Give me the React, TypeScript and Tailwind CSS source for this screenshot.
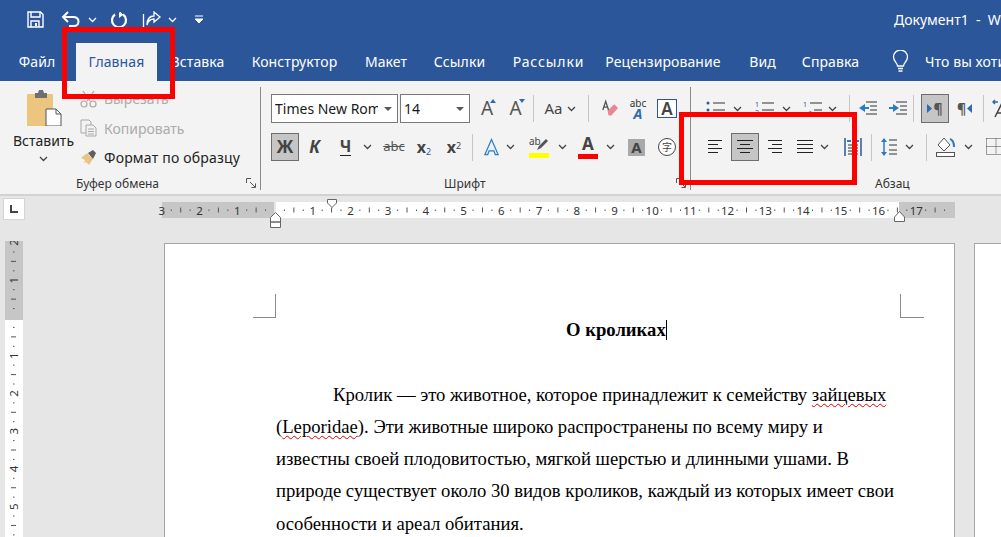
import React from "react";

const Chev = ({ c = "#444" }: { c?: string }) => (
  <svg width="9" height="6" viewBox="0 0 9 6" fill="none" className="shrink-0"><path d="M1 1l3.5 3.5L8 1" stroke={c} strokeWidth="1.3" /></svg>
);

const Cell = ({ w, children }: { w: string; children?: React.ReactNode }) => (
  <div className={`${w} h-full shrink-0 flex items-center justify-center`}>{children}</div>
);

const Sep = () => <div className="w-px h-[27px] bg-[#c6c6c6] shrink-0" />;

const Combo = ({ w, text }: { w: string; text: string }) => (
  <div className={`${w} h-[29px] shrink-0 bg-white border border-[#7a7a7a] flex items-center pl-[3px] pr-[5px] text-[14px] text-[#1a1a1a] overflow-hidden`}>
    <span className="flex-1 overflow-hidden whitespace-nowrap mr-[6px]">{text}</span>
    <svg width="8" height="4" viewBox="0 0 8 4" className="shrink-0"><path d="M0 0h8L4 4z" fill="#555" /></svg>
  </div>
);

const lines = (rows: [number, number][], width = 14) => (
  <svg width={width} height="16" viewBox={`0 0 ${width} 16`} className="shrink-0">
    {rows.map(([a, b], i) => (
      <path key={i} d={`M${a} ${1.5 + i * 4}H${b}`} stroke="#222" strokeWidth="1" />
    ))}
  </svg>
);

const Launcher = () => (
  <svg width="11" height="11" viewBox="0 0 11 11" fill="none" stroke="#555" strokeWidth="1" className="shrink-0">
    <path d="M.5 5V.5H5M4 4l5 5M5.5 9.5h4v-4" />
  </svg>
);

const Tab = ({ w, t, active }: { w: string; t: string; active?: boolean }) => (
  <div className={`${w} shrink-0 h-[38px] flex items-center justify-center whitespace-nowrap pb-[1px] ${active ? "bg-[#f3f3f3] text-[#2b579a]" : "text-white"}`}>{t}</div>
);

const HRuler = () => {
  const zero = 113;
  const cm = 37.72;
  const items: React.ReactNode[] = [];
  for (let n = -3; n <= 17; n++) {
    const x = zero + n * cm;
    if (n !== 0)
      items.push(<text key={`t${n}`} x={x} y="12.5" textAnchor="middle" fontSize="11.5" fill="#333">{Math.abs(n)}</text>);
    [0.25, 0.5, 0.75].forEach((f) => {
      const px = x + f * cm;
      if (px < 792)
        items.push(f === 0.5
          ? <path key={`${n}${f}`} d={`M${px} 5.5v5`} stroke="#555" />
          : <path key={`${n}${f}`} d={`M${px} 7.5v1.5`} stroke="#555" />);
    });
  }
  return (
    <svg width="800" height="32" viewBox="0 0 800 32" className="overflow-visible block">
      <rect x="0" y="4" width="112" height="16" fill="#c6c6c6" />
      <rect x="114" y="4" width="623" height="16" fill="#fff" />
      <rect x="737" y="4" width="56" height="16" fill="#c6c6c6" />
      <g transform="translate(0,4)">{items}</g>
      <path d="M108.5 19.5l5-5 5 5v4.5h-10zM108.5 24h10v5.5h-10z" fill="#fff" stroke="#666" />
      <path d="M165.500 1.500h9v3.500l-4.500 4.500-4.500-4.500z" fill="#fff" stroke="#666" />
      <path d="M732.500 19l5-5.500 5 5.500v4.500h-10z" fill="#fff" stroke="#666" />
    </svg>
  );
};

const VRuler = () => {
  const zero = 77;
  const cm = 37.72;
  const items: React.ReactNode[] = [];
  for (let n = -2; n <= 6; n++) {
    const y = zero + n * cm;
    if (n !== 0)
      items.push(<text key={`t${n}`} transform={`translate(13,${y}) rotate(-90)`} textAnchor="middle" fontSize="11.5" fill="#333">{Math.abs(n)}</text>);
    [0.25, 0.5, 0.75].forEach((f) => {
      const py = y + f * cm;
      items.push(f === 0.5
        ? <path key={`${n}${f}`} d={`M6 ${py}h5`} stroke="#555" />
        : <path key={`${n}${f}`} d={`M8 ${py}h1.500`} stroke="#555" />);
    });
  }
  return (
    <svg width="18" height="296" viewBox="0 0 18 296" className="block">
      <rect width="18" height="79" fill="#c6c6c6" />
      <rect y="79" width="18" height="217" fill="#fff" />
      {items}
    </svg>
  );
};

export default function App() {
  return (
    <div className="relative w-[1001px] h-[537px] overflow-hidden flex flex-col bg-[#e6e6e6] [font-family:'Noto_Sans',sans-serif]">
      {/* Title bar */}
      <div className="h-[43px] bg-[#2b579a] flex items-center shrink-0 pb-[4px] pl-[27px] text-white">
        <svg width="17" height="17" viewBox="0 0 17 17" fill="none" stroke="#fff" strokeWidth="1.400" className="shrink-0">
          <path d="M1 1h12.500L16 3.500V16H1z" />
          <path d="M4 1v5h9V1M4 16v-6h8v6" />
          <path d="M8 12h2v3H8z" fill="#fff" stroke="none" />
        </svg>
        <svg width="20" height="17" viewBox="0 0 20 17" fill="none" className="ml-[17px] shrink-0">
          <path d="M7 1L2 6l5 5" stroke="#fff" strokeWidth="2" />
          <path d="M2 6h10c3.500 0 5.500 2 5.500 4.500S15.500 15 13 15H8" stroke="#fff" strokeWidth="2" />
        </svg>
        <div className="ml-[7px] shrink-0"><Chev c="#fff" /></div>
        <svg width="18" height="18" viewBox="0 0 18 18" fill="none" className="ml-[13px] shrink-0">
          <path d="M5 3.500a7 7 0 1 0 8 0" stroke="#fff" strokeWidth="2.200" />
          <path d="M9 1v6l4-3z" fill="#fff" />
          <path d="M10 1l4 4" stroke="#fff" strokeWidth="1" />
        </svg>
        <svg width="20" height="18" viewBox="0 0 20 18" fill="none" stroke="#fff" className="ml-[14px] shrink-0" strokeWidth="1.300">
          <path d="M1.500 3v14M1.500 17h10" />
          <path d="M12 1l6 5-6 5V8c-4 0-6 2-7 6 0-6 3-9 7-9z" />
        </svg>
        <div className="ml-[6px] shrink-0"><Chev c="#fff" /></div>
        <svg width="8" height="9" viewBox="0 0 8 9" className="ml-[18px] shrink-0">
          <path d="M0 1h8M0 4h8L4 8z" fill="#fff" stroke="#fff" strokeWidth="1" />
        </svg>
        <div className="ml-[691px] shrink-0 whitespace-nowrap text-[14px]">Документ1&nbsp;&nbsp;-&nbsp;&nbsp;Word</div>
      </div>
      {/* Tabs */}
      <div className="h-[38px] bg-[#2b579a] flex text-[14px] tracking-[0.1px] shrink-0 whitespace-nowrap">
        <Tab w="w-[76px] pr-[2px]" t="Файл" />
        <Tab w="w-[81px]" t="Главная" active />
        <Tab w="w-[81px]" t="Вставка" />
        <Tab w="w-[113px]" t="Конструктор" />
        <Tab w="w-[70px]" t="Макет" />
        <Tab w="w-[77px]" t="Ссылки" />
        <Tab w="w-[101px] tracking-[0.9px]" t="Рассылки" />
        <Tab w="w-[128px]" t="Рецензирование" />
        <Tab w="w-[71px]" t="Вид" />
        <Tab w="w-[65px]" t="Справка" />
        <div className="ml-[29px] flex items-center text-white h-full pb-[1px]">
          <svg width="17" height="23" viewBox="0 0 17 23" fill="none" stroke="#fff" strokeWidth="1.300" className="shrink-0">
            <path d="M5.500 16c0-3-4-4.500-4-9a7 7 0 0 1 14 0c0 4.500-4 6-4 9z" />
            <path d="M6 18.500h5M6.500 21h4" />
          </svg>
          <span className="ml-[16px]">Что вы хотите сделать?</span>
        </div>
      </div>

      {/* Ribbon */}
      <div className="h-[115px] bg-[#f3f3f3] border-b-2 border-[#d2d2d2] flex text-[#333] shrink-0 overflow-hidden">
        {/* Clipboard */}
        <div className="w-[261px] shrink-0 relative flex flex-col pt-[8px] pb-[2px]">
          <div className="flex-1 flex">
            <div className="w-[86px] flex flex-col items-center pl-[1px]">
              <svg width="36" height="37" viewBox="0 0 36 37" className="shrink-0">
                <path d="M1 5h26v32H1z" fill="#ecc57e" />
                <path d="M9 4h3l1-3h4l1 3h3v5H9z" fill="#6f6f6f" />
                <path d="M20 20h10l5 5v12H20z" fill="#fff" stroke="#555" />
                <path d="M30 20v5h5" fill="none" stroke="#555" />
              </svg>
              <span className="text-[14px] mt-[5px] leading-[20px] text-[#222]">Вставить</span>
              <div className="mt-[5px]"><Chev /></div>
            </div>
            <div className="flex flex-col text-[14px] leading-[29.5px] -ml-[6px] -mt-[5px] whitespace-nowrap">
              <div className="flex items-center gap-[7px] text-[#ababab]">
                <svg width="17" height="18" viewBox="0 0 17 18" fill="none" stroke="#a8a8a8" strokeWidth="1.200" className="shrink-0">
                  <path d="M3 1l7 10M14 1L7 11" /><circle cx="4" cy="14" r="3" /><circle cx="13" cy="14" r="3" />
                </svg>
                <span>Вырезать</span>
              </div>
              <div className="flex items-center gap-[7px] text-[#ababab]">
                <svg width="17" height="18" viewBox="0 0 17 18" fill="#f3f3f3" stroke="#a8a8a8" className="shrink-0">
                  <path d="M1 1h8l2 2v11H1z" /><path d="M6 6h7l3 3v8H6z" /><path d="M8 10h6M8 12.500h6M8 15h6" />
                </svg>
                <span>Копировать</span>
              </div>
              <div className="flex items-center gap-[7px] text-[#222]">
                <svg width="17" height="17" viewBox="0 0 17 17" className="shrink-0">
                  <path d="M1 9l6-5 6 6-4 6-3-3-2 1 1-3z" fill="#e7c586" />
                  <path d="M8 4l5-3 3 3-3 6z" fill="#5f5f5f" />
                </svg>
                <span className="tracking-[0.2px]">Формат по образцу</span>
              </div>
            </div>
          </div>
          <div className="flex items-center h-[17px] text-[12px] pl-[76px] pr-[4px] justify-between">
            <span>Буфер обмена</span>
            <Launcher />
          </div>
          <div className="absolute right-0 top-[6px] bottom-[4px] w-px bg-[#8a8a8a]" />
        </div>

        {/* Font */}
        <div className="w-[430px] shrink-0 relative flex flex-col pt-[13px] pb-[2px]">
          <div className="h-[29px] flex items-center pl-[10px]">
            <Combo w="w-[127px]" text="Times New Roman" />
            <div className="w-[2px] shrink-0" />
            <Combo w="w-[70px]" text="14" />
            <Cell w="w-[28px]">
              <span className="relative ml-[6px] text-[19px] leading-none text-[#555]">A<svg width="6" height="4" viewBox="0 0 6 4" className="absolute -right-[3px] top-0"><path d="M0 4l3-4 3 4z" fill="#2b6cb0" /></svg></span>
            </Cell>
            <Cell w="w-[35px]">
              <span className="relative text-[19px] leading-none text-[#555]">A<svg width="6" height="4" viewBox="0 0 6 4" className="absolute -right-[3px] top-0"><path d="M0 0l3 4 3-4z" fill="#2b6cb0" /></svg></span>
            </Cell>
            <Sep />
            <div className="w-[10px] shrink-0" />
            <span className="text-[15px] text-[#444] w-[19px] shrink-0 text-center">Aa</span>
            <Cell w="w-[16px]"><Chev /></Cell>
            <div className="w-[9px] shrink-0" />
            <Sep />
            <div className="w-[11px] shrink-0" />
            <svg width="18" height="19" viewBox="0 0 19 19" className="shrink-0">
              <path d="M8 12l7-7 4 4-7 8H9z" fill="#e98595" />
              <path d="M3 11L6 2l3 9M4 8h4" fill="none" stroke="#555" strokeWidth="1.400" />
            </svg>
            <div className="w-[11px] shrink-0" />
            <div className="relative w-[18px] h-[20px] shrink-0 leading-none text-center">
              <span className="block text-[10px] text-[#333] leading-[9px]">abc</span>
              <span className="block text-[14px] italic font-bold text-[#2b6cb0] leading-[11px]">A</span>
            </div>
            <div className="w-[10px] shrink-0" />
            <div className="w-[20px] h-[19px] shrink-0 border border-[#2b579a] bg-white flex items-center justify-center text-[17px] leading-none font-semibold text-[#444]">A</div>
          </div>
          <div className="h-[28px] flex items-center pl-[10px] mt-[10px]">
            <div className="w-[28px] h-[28px] shrink-0 bg-[#c6c6c6] border border-[#6e6e6e] flex items-center justify-center font-bold text-[17px] text-[#444]">Ж</div>
            <Cell w="w-[31px]"><span className="font-bold italic text-[17px] text-[#444]">К</span></Cell>
            <Cell w="w-[31px]"><span className="font-bold text-[16px] text-[#444] border-b-[1.500px] border-[#222] leading-[17px]">Ч</span></Cell>
            <Cell w="w-[12px]"><Chev /></Cell>
            <Cell w="w-[42px]"><span className="text-[13px] text-[#555] line-through">abc</span></Cell>
            <Cell w="w-[18px]"><span className="font-bold text-[16px] text-[#444] leading-none">x<sub className="text-[9px] text-[#2b579a] font-normal">2</sub></span></Cell>
            <div className="w-[12px] shrink-0" />
            <Cell w="w-[18px]"><span className="font-bold text-[16px] text-[#444] leading-none">x<sup className="text-[9px] font-normal">2</sup></span></Cell>
            <div className="w-[9px] shrink-0" />
            <Sep />
            <div className="w-[10px] shrink-0" />
            <svg width="17" height="20" viewBox="0 0 18 20" className="shrink-0">
              <path d="M9 2L2 18h3l1.500-4h5L13 18h3z" fill="#eaf3fb" stroke="#2b7bc4" strokeWidth="1.300" />
            </svg>
            <Cell w="w-[20px]"><Chev /></Cell>
            <div className="w-[9px] shrink-0" />
            <div className="w-[20px] shrink-0 flex flex-col items-center h-[28px]">
              <svg width="20" height="17" viewBox="0 0 20 17" className="mt-[3px] shrink-0">
                <text x="0" y="9" fontSize="10" fill="#444">ab</text>
                <path d="M8 14l2-4 7-7 2 2-7 7z" fill="#555" />
              </svg>
              <div className="w-[20px] h-[5px] bg-[#ffff00]" />
            </div>
            <Cell w="w-[26px]"><Chev /></Cell>
            <div className="w-[3px] shrink-0" />
            <div className="w-[20px] shrink-0 flex flex-col items-center h-[28px]">
              <span className="font-bold text-[17px] leading-[20px] text-[#444] mt-[1px]">A</span>
              <div className="w-[20px] h-[5px] bg-[#ff0000]" />
            </div>
            <Cell w="w-[24px]"><Chev /></Cell>
            <div className="w-[6px] shrink-0" />
            <div className="w-[17px] h-[17px] shrink-0 bg-[#a9a9a9] flex items-center justify-center font-bold text-[15px] leading-none text-[#444]">A</div>
            <div className="w-[13px] shrink-0" />
            <div className="w-[18px] h-[18px] shrink-0 rounded-full border border-[#444] bg-white flex items-center justify-center text-[10px] leading-none text-[#444] [font-family:'Noto_Sans_CJK_SC',sans-serif]">字</div>
          </div>
          <div className="flex-1" />
          <div className="h-[17px] flex items-center text-[12px] pl-[183px] pr-[4px] justify-between">
            <span>Шрифт</span>
            <Launcher />
          </div>
          <div className="absolute right-0 top-[6px] bottom-[4px] w-px bg-[#8a8a8a]" />
        </div>

        {/* Paragraph */}
        <div className="flex-1 relative flex flex-col pt-[13px] pb-[2px] overflow-hidden">
          <div className="h-[29px] flex items-center pl-[15px]">
            <svg width="20" height="18" viewBox="0 0 20 18" className="shrink-0">
              <circle cx="2" cy="3" r="1.500" fill="#2b579a" /><circle cx="2" cy="10" r="1.500" fill="#2b579a" />
              <path d="M7 3h12M7 10h12" stroke="#333" strokeWidth="1.200" />
            </svg>
            <Cell w="w-[23px]"><Chev /></Cell>
            <div className="w-[6px] shrink-0" />
            <svg width="20" height="18" viewBox="0 0 20 18" className="shrink-0">
              <text x="0" y="7" fontSize="7" fill="#2b579a">1</text><text x="0" y="15" fontSize="7" fill="#2b579a">2</text>
              <path d="M7 3h12M7 10h12" stroke="#333" strokeWidth="1.200" />
            </svg>
            <Cell w="w-[22px]"><Chev /></Cell>
            <div className="w-[6px] shrink-0" />
            <svg width="20" height="18" viewBox="0 0 20 18" className="shrink-0">
              <text x="0" y="7" fontSize="7" fill="#2b579a">1</text><text x="5" y="15" fontSize="7" fill="#2b579a">a</text>
              <path d="M7 3h12M11 10h8" stroke="#333" strokeWidth="1.200" />
            </svg>
            <Cell w="w-[18px]"><Chev /></Cell>
            <div className="w-[8px] shrink-0" />
            <Sep />
            <div className="w-[8px] shrink-0" />
            <svg width="19" height="18" viewBox="0 0 19 18" className="shrink-0" fill="none">
              <path d="M8 2h11M12 6h7M12 10h7M8 14h11" stroke="#333" />
              <path d="M7 4L1 8l6 4z" fill="#2b7bc4" /><path d="M5 8h6" stroke="#2b7bc4" strokeWidth="2" />
            </svg>
            <div className="w-[11px] shrink-0" />
            <svg width="19" height="18" viewBox="0 0 19 18" className="shrink-0" fill="none">
              <path d="M8 2h11M12 6h7M12 10h7M8 14h11" stroke="#333" />
              <path d="M5 4l6 4-6 4z" fill="#2b7bc4" /><path d="M1 8h6" stroke="#2b7bc4" strokeWidth="2" />
            </svg>
            <div className="w-[6px] shrink-0" />
            <Sep />
            <div className="w-[7px] shrink-0" />
            <div className="w-[28px] h-[29px] shrink-0 bg-[#c6c6c6] border border-[#6e6e6e] flex items-center justify-center text-[14px] font-bold text-[#555] leading-none">
              <svg width="5" height="9" viewBox="0 0 5 9" className="mr-[1px] shrink-0"><path d="M0 0l5 4.500L0 9z" fill="#2b6cb0" /></svg>¶
            </div>
            <div className="w-[8px] shrink-0" />
            <div className="flex items-center text-[14px] font-bold text-[#555] w-[18px] shrink-0 leading-none">
              ¶<svg width="5" height="9" viewBox="0 0 5 9" className="ml-[1px] shrink-0"><path d="M5 0L0 4.500 5 9z" fill="#2b6cb0" /></svg>
            </div>
            <div className="w-[8px] shrink-0" />
            <Sep />
            <div className="w-[8px] shrink-0" />
            <svg width="16" height="20" viewBox="0 0 16 20" className="shrink-0" fill="none">
              <path d="M6 3H1m2-2L1 3l2 2" stroke="#2b6cb0" strokeWidth="1.500" />
              <path d="M3 18L9 6l5 12M5 14h7" stroke="#444" strokeWidth="1.500" />
            </svg>
          </div>
          <div className="h-[28px] flex items-center pl-[17px] mt-[10px]">
            {lines([[0, 14], [0, 10], [0, 14], [0, 10]])}
            <div className="w-[9px] shrink-0" />
            <div className="w-[28px] h-[28px] shrink-0 bg-[#c6c6c6] border border-[#6e6e6e] flex items-center justify-center">
              {lines([[0, 16], [3, 13], [0, 16], [3, 13]], 16)}
            </div>
            <div className="w-[9px] shrink-0" />
            {lines([[0, 14], [4, 14], [0, 14], [4, 14]])}
            <div className="w-[15px] shrink-0" />
            {lines([[0, 16], [0, 16], [0, 16], [0, 16]], 16)}
            <Cell w="w-[22px]"><Chev /></Cell>
            <div className="w-[9px] shrink-0" />
            <svg width="18" height="20" viewBox="0 0 18 20" className="shrink-0" fill="none">
              <path d="M1 1v18M17 1v18" stroke="#2b579a" strokeWidth="1.500" />
              <path d="M4 8h10M4 11h10M4 14h10M4 17h10" stroke="#333" />
              <path d="M3 4h4M11 4h4" stroke="#2b7bc4" strokeWidth="2" />
            </svg>
            <div className="w-[9px] shrink-0" />
            <Sep />
            <div className="w-[9px] shrink-0" />
            <svg width="16" height="20" viewBox="0 0 16 20" className="shrink-0" fill="none">
              <path d="M3 2v16" stroke="#2b7bc4" strokeWidth="1.500" /><path d="M0 5l3-4 3 4zM0 15l3 4 3-4z" fill="#2b7bc4" />
              <path d="M8 3h8M8 8h8M8 13h8M8 17h8" stroke="#333" />
            </svg>
            <Cell w="w-[24px]"><Chev /></Cell>
            <div className="w-[5px] shrink-0" />
            <Sep />
            <div className="w-[9px] shrink-0" />
            <svg width="20" height="22" viewBox="0 0 20 22" className="shrink-0" fill="none">
              <path d="M8 2L2 9l6 6 6-6z" stroke="#555" fill="#fff" />
              <path d="M14 3c3 1 4 4 4 8" stroke="#2b7bc4" strokeWidth="2" />
              <rect x="0.500" y="16.500" width="18" height="4" fill="#fff" stroke="#555" />
            </svg>
            <Cell w="w-[24px]"><Chev /></Cell>
            <div className="w-[6px] shrink-0" />
            <svg width="20" height="20" viewBox="0 0 20 20" className="shrink-0" fill="none" stroke="#444">
              <path d="M.5 1.500h19M.5 9.500h19M.5 17.500h19M.5 1.500v16M10 1.500v16" strokeDasharray="1 1" />
            </svg>
          </div>
          <div className="flex-1" />
          <div className="h-[17px] flex items-center text-[12px] pl-[184px] whitespace-nowrap">
            <span>Абзац</span>
          </div>
        </div>
      </div>

      {/* Document area */}
      <div className="flex-1 min-h-0 flex flex-col">
        <div className="h-[45px] shrink-0 flex pl-[3px] pt-[2px] relative">
          <div className="w-[22px] h-[22px] shrink-0 bg-white border border-[#d5d5d5] flex items-center justify-center">
            <svg width="9" height="8" viewBox="0 0 9 8"><path d="M1 0v7h7" fill="none" stroke="#444" strokeWidth="2" /></svg>
          </div>
          <div className="ml-[137px] h-[30px]"><HRuler /></div>
        </div>
        <div className="flex-1 min-h-0 flex">
          <div className="w-[164px] shrink-0 pl-[5px]"><VRuler /></div>
          <div className="w-[791px] shrink-0 mt-[2px] bg-white border border-[#a6a6a6] relative text-black [font-family:'Liberation_Serif',serif] text-[18.67px] h-[400px]">
            <div className="absolute left-[88px] top-[50px] w-[23px] h-[24px] border-r border-b border-[#8a8a8a]" />
            <div className="absolute left-[735px] top-[50px] w-[24px] h-[24px] border-l border-b border-[#8a8a8a]" />
            <div className="pl-[111px] pt-[70px] leading-[32.25px] whitespace-nowrap">
              <div className="pl-[290px] font-bold flex items-center">О кроликах<span className="w-px h-[20px] bg-black" /></div>
              <div className="h-[32.25px]" />
              <div className="pl-[57px]">Кролик — это животное, которое принадлежит к семейству <span className="underline decoration-wavy decoration-[#e00000] decoration-1 underline-offset-2">зайцевых</span></div>
              <div>(<span className="underline decoration-wavy decoration-[#e00000] decoration-1 underline-offset-2">Leporidae</span>). Эти животные широко распространены по всему миру и</div>
              <div>известны своей плодовитостью, мягкой шерстью и длинными ушами. В</div>
              <div>природе существует около 30 видов кроликов, каждый из которых имеет свои</div>
              <div>особенности и ареал обитания.</div>
            </div>
          </div>
          <div className="ml-[19px] flex-1 mt-[2px] bg-white border border-[#a6a6a6] border-r-0 h-[400px]" />
        </div>
      </div>

      {/* Red annotation frames */}
      <div className="absolute left-[62px] top-[27px] w-[113px] h-[72px] border-[5px] border-[#ff0000]" />
      <div className="absolute left-[679px] top-[112px] w-[178px] h-[73px] border-[5px] border-[#ff0000]" />
    </div>
  );
}
